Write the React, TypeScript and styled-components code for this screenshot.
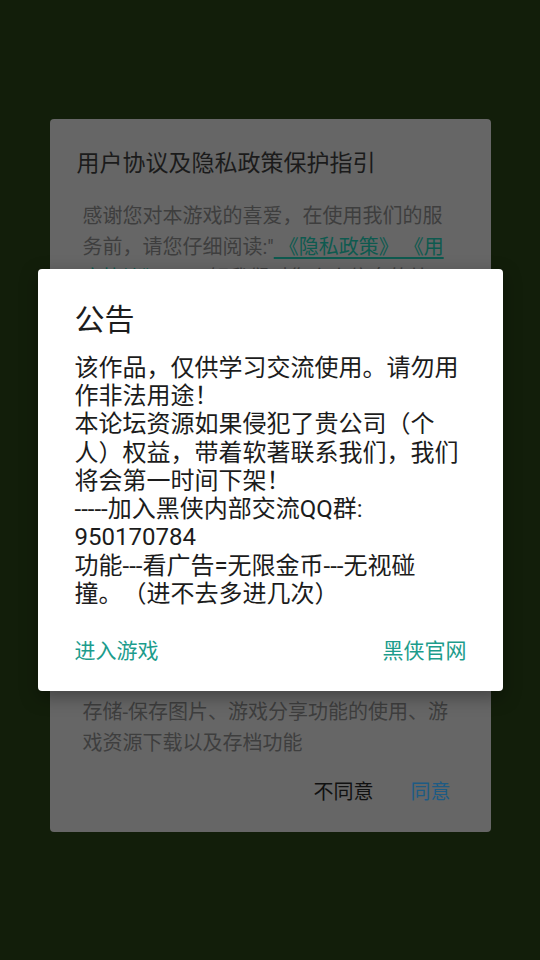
import React from "react";
import styled, { createGlobalStyle } from "styled-components";

const GlobalStyle = createGlobalStyle`
  html, body {
    margin: 0;
    padding: 0;
    background: #121e0a;
  }
  * { box-sizing: border-box; }
`;

const FONT = `Roboto, "Noto Sans CJK SC", "Noto Sans", sans-serif`;

const Screen = styled.div`
  position: relative;
  width: 540px;
  height: 960px;
  overflow: hidden;
  background: #121e0a;
  font-family: ${FONT};
  text-spacing-trim: space-all;
  display: flex;
  justify-content: center;
  align-items: flex-start;
  padding-top: 119px;
`;

const BackCard = styled.div`
  width: 441px;
  background: #666666;
  border-radius: 4px;
  padding: 30px 0 28px;
  display: flex;
  flex-direction: column;
`;

const BackTitle = styled.div`
  padding: 0 27px;
  font-size: 23px;
  line-height: 30px;
  color: #1b1b1b;
`;

const BackBody = styled.div`
  margin-top: 22px;
  padding: 0 38px 0 33px;
  font-size: 20px;
  line-height: 31px;
  color: #3e3e3e;
  white-space: pre-line;
  text-spacing-trim: space-all;
`;

const BackLink = styled.span`
  color: #0e5a4f;
  text-decoration: underline;
  text-underline-offset: 3px;
`;

const BackActions = styled.div`
  margin-top: 21px;
  padding: 0 40px;
  display: flex;
  justify-content: flex-end;
  gap: 37px;
`;

const BackButton = styled.span<{ $primary?: boolean }>`
  font-size: 20px;
  line-height: 24px;
  color: ${(p) => (p.$primary ? "#1d5b84" : "#111111")};
`;

const Overlay = styled.div`
  position: absolute;
  inset: 0;
  display: flex;
  align-items: center;
  justify-content: center;
`;

const Dialog = styled.div`
  width: 465px;
  background: #ffffff;
  border-radius: 4px;
  padding: 33px 37px 28px;
  box-shadow: 0 6px 18px rgba(0, 0, 0, 0.35);
  display: flex;
  flex-direction: column;
`;

const DialogTitle = styled.div`
  font-size: 30px;
  line-height: 36px;
  color: #1c1c1c;
`;

const DialogBody = styled.div`
  margin-top: 15.6px;
  font-size: 24px;
  line-height: 28.2px;
  color: #1c1c1c;
  white-space: pre-line;
  text-spacing-trim: space-all;
`;

const DialogActions = styled.div`
  margin-top: 30.6px;
  display: flex;
  justify-content: space-between;
`;

const DialogButton = styled.span`
  font-size: 21px;
  line-height: 24px;
  color: #1c9c8c;
  margin-right: -1px;
`;

const hiddenLines = [
  "，了解我们对您个人信息的处",
  "理规则及申请权限的目的。我们将严格按",
  "照上述政策为您提供服务，保护您的个人",
  "信息安全。",
  "为了向您提供更好的游戏体验，我们可能",
  "会申请以下权限：",
  "电话-读取设备识别码，用于统计分析、",
  "游戏防沉迷及账号安全保护",
  "网络-访问网络，用于游戏数据的同步、",
  "广告展示以及版本更新",
  "位置-获取大致位置信息，用于游戏内容",
  "推荐与统计分析",
  "相机-扫描二维码及拍照上传头像功能的",
  "使用，以及游戏内反馈问题截图上传",
  "存储-保存图片、游戏分享功能的使用、游",
  "戏资源下载以及存档功能",
];

const notice =
  "该作品，仅供学习交流使用。请勿用作非法用途！\n" +
  "本论坛资源如果侵犯了贵公司（个人）权益，带着软著联系我们，我们将会第一时间下架！\n" +
  "-----加入黑侠内部交流QQ群:\n" +
  "950170784\n" +
  "功能---看广告=无限金币---无视碰\n撞。（进不去多进几次）";

export default function App() {
  return (
    <>
      <GlobalStyle />
      <Screen>
        <BackCard>
          <BackTitle>用户协议及隐私政策保护指引</BackTitle>
          <BackBody>
            {"感谢您对本游戏的喜爱，在使用我们的服\n务前，请您仔细阅读:\""}
            <BackLink>{" 《隐私政策》 《用\n户协议》"}</BackLink>
            {"\"" + hiddenLines[0] + "\n" + hiddenLines.slice(1).join("\n")}
          </BackBody>
          <BackActions>
            <BackButton>不同意</BackButton>
            <BackButton $primary>同意</BackButton>
          </BackActions>
        </BackCard>
        <Overlay>
          <Dialog>
            <DialogTitle>公告</DialogTitle>
            <DialogBody>{notice}</DialogBody>
            <DialogActions>
              <DialogButton>进入游戏</DialogButton>
              <DialogButton>黑侠官网</DialogButton>
            </DialogActions>
          </Dialog>
        </Overlay>
      </Screen>
    </>
  );
}
